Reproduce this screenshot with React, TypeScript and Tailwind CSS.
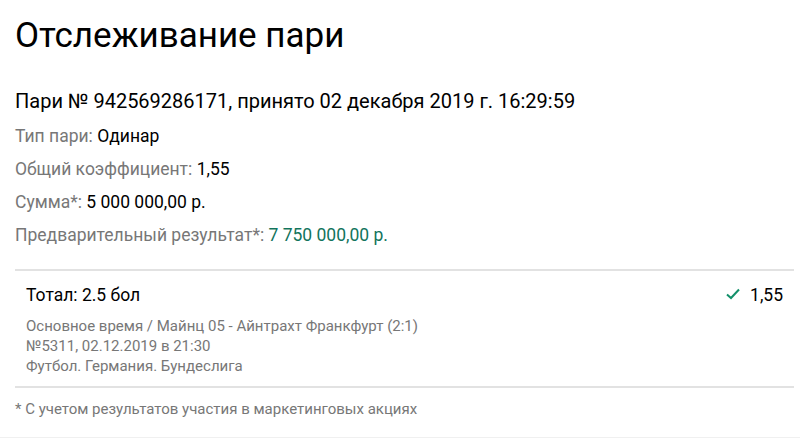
import React from 'react';

const Row = ({ label, value, accent }: { label: string; value: string; accent?: boolean }) => (
  <div className="text-[17.5px] leading-[33px]">
    <span className="text-[#777777]">{label} </span>
    <span className={accent ? 'text-[#12745c]' : 'text-black'}>{value}</span>
  </div>
);

export default function App() {
  return (
    <div className="w-[800px] h-[438px] bg-white border-b border-[#f0f0f0] font-['Roboto',sans-serif] overflow-hidden">
      <div className="pl-[15px] pr-[6px] pt-[12px]">
        <h1 className="text-[35px] leading-[48px] text-black font-normal">Отслеживание пари</h1>
        <div className="mt-[29px] text-[20px] leading-[24px] text-black">
          Пари № 942569286171, принято 02 декабря 2019 г. 16:29:59
        </div>
        <div className="mt-[7px]">
          <Row label="Тип пари:" value="Одинар" />
          <Row label="Общий коэффициент:" value="1,55" />
          <Row label="Сумма*:" value="5 000 000,00 р." />
          <Row label="Предварительный результат*:" value="7 750 000,00 р." accent />
        </div>
        <div className="mt-[17px] border-y-2 border-[#e2e2e2] px-[11px] pt-[13px] pb-[10px]">
          <div className="flex items-center justify-between text-[17.5px] leading-[22px] text-black">
            <span>Тотал: 2.5 бол</span>
            <span className="flex items-center gap-[10px]">
              <svg width="14" height="12" viewBox="0 0 14 12" fill="none" className="mt-[-2px]">
                <path d="M1 6.5 L5 10 L13 1.5" stroke="#13906a" strokeWidth="2" />
              </svg>
              1,55
            </span>
          </div>
          <div className="mt-[10px] text-[15px] leading-[20px] text-[#777777]">
            <div>Основное время / Майнц 05 - Айнтрахт Франкфурт (2:1)</div>
            <div>№5311, 02.12.2019 в 21:30</div>
            <div>Футбол. Германия. Бундеслига</div>
          </div>
        </div>
        <div className="mt-[11px] text-[15px] leading-[20px] text-[#777777]">
          * С учетом результатов участия в маркетинговых акциях
        </div>
      </div>
    </div>
  );
}
